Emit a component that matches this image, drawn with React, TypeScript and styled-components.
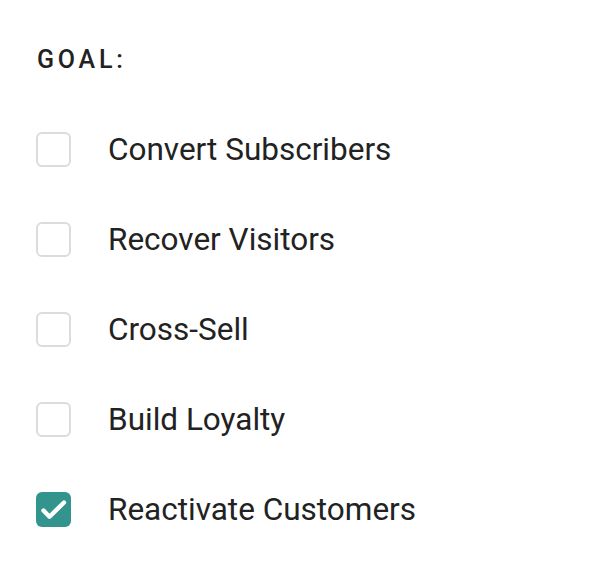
import React, { useState } from "react";
import styled, { createGlobalStyle } from "styled-components";

const Global = createGlobalStyle`
  html, body { margin: 0; padding: 0; background: #fff; }
  body { font-family: Roboto, "Noto Sans", sans-serif; }
`;

const Panel = styled.div`
  padding: 45px 36px 0 36px;
  display: flex;
  flex-direction: column;
`;

const Title = styled.div`
  font-size: 25px;
  font-weight: 500;
  letter-spacing: 3.8px;
  color: #222;
  line-height: 29px;
  margin-bottom: 58px;
  padding-left: 1px;
`;

const List = styled.div`
  display: flex;
  flex-direction: column;
  gap: 55px;
`;

const Row = styled.label`
  display: flex;
  align-items: center;
  gap: 37px;
  height: 35px;
  cursor: pointer;
`;

const Box = styled.span<{ $checked: boolean }>`
  width: 35px;
  height: 35px;
  box-sizing: border-box;
  border-radius: 6px;
  border: ${(p) => (p.$checked ? "none" : "2px solid #dcdcdc")};
  background: ${(p) => (p.$checked ? "#33938d" : "#fff")};
  display: flex;
  align-items: center;
  justify-content: center;
  flex-shrink: 0;
`;

const Label = styled.span`
  font-size: 31.5px;
  color: #222;
  line-height: 35px;
`;

const items = [
  "Convert Subscribers",
  "Recover Visitors",
  "Cross-Sell",
  "Build Loyalty",
  "Reactivate Customers",
];

export default function App() {
  const [checked, setChecked] = useState<boolean[]>([false, false, false, false, true]);
  return (
    <>
      <Global />
      <Panel>
        <Title>GOAL:</Title>
        <List>
          {items.map((t, i) => (
            <Row
              key={t}
              onClick={() => setChecked((c) => c.map((v, j) => (j === i ? !v : v)))}
            >
              <Box $checked={checked[i]}>
                {checked[i] && (
                  <svg width="35" height="35" viewBox="0 0 35 35" fill="none">
                    <path d="M7.5 18.5l6 6.2L28 10.5" stroke="#fff" strokeWidth="4.4" strokeLinecap="round" strokeLinejoin="round" />
                  </svg>
                )}
              </Box>
              <Label>{t}</Label>
            </Row>
          ))}
        </List>
      </Panel>
    </>
  );
}
